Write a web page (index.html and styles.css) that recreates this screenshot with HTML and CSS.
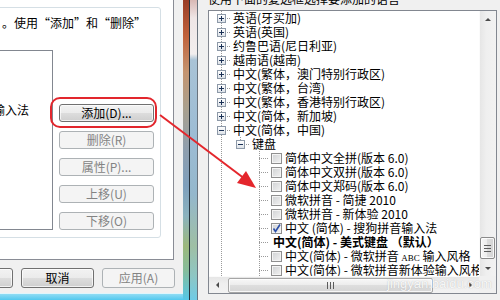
FILE: index.html
```html
<!DOCTYPE html>
<html lang="zh-CN">
<head>
<meta charset="utf-8">
<title>文本服务和输入语言</title>
<link rel="stylesheet" href="styles.css">
</head>
<body>
<div class="screen">
  <div class="win-left">
    <div class="tabpage">
      <div class="group">
        <p class="hint">。使用<span class="qo">“</span>添加<span class="qc">”</span>和<span class="qo">“</span>删除<span class="qc">”</span></p>
        <div class="group-body">
          <div class="list"><div class="list-item">输入法</div></div>
          <div class="btns">
            <button class="btn">添加(D)...</button>
            <button class="btn dis">删除(R)</button>
            <button class="btn dis">属性(P)...</button>
            <button class="btn dis">上移(U)</button>
            <button class="btn dis">下移(O)</button>
          </div>
        </div>
      </div>
    </div>
    <div class="footer">
      <button class="btn">确定</button>
      <button class="btn">取消</button>
      <button class="btn dis">应用(A)</button>
    </div>
    <div class="glass-b"></div>
  </div>

  <div class="frame">
    <div class="f1"></div><div class="fl"></div><div class="f2"></div><div class="fl2"></div>
  </div>

  <div class="win-right">
    <p class="caption">使用下面的复选框选择要添加的语言</p>
    <div class="tree">
      <div class="view">
        <div class="row"><span class="cell c-root"><i class="box"></i></span><span class="t">英语(牙买加)</span></div>
        <div class="row"><span class="cell c-root"><i class="box"></i></span><span class="t">英语(英国)</span></div>
        <div class="row"><span class="cell c-root"><i class="box"></i></span><span class="t">约鲁巴语(尼日利亚)</span></div>
        <div class="row"><span class="cell c-root"><i class="box"></i></span><span class="t">越南语(越南)</span></div>
        <div class="row"><span class="cell c-root"><i class="box"></i></span><span class="t">中文(繁体，澳门特别行政区)</span></div>
        <div class="row"><span class="cell c-root"><i class="box"></i></span><span class="t">中文(繁体，台湾)</span></div>
        <div class="row"><span class="cell c-root"><i class="box"></i></span><span class="t">中文(繁体，香港特别行政区)</span></div>
        <div class="row"><span class="cell c-root"><i class="box"></i></span><span class="t">中文(简体，新加坡)</span></div>
        <div class="row"><span class="cell c-root"><i class="box minus"></i></span><span class="t">中文(简体，中国)</span></div>
        <div class="row"><span class="cell c-line"></span><span class="cell c-last"><i class="box minus"></i></span><span class="t">键盘</span></div>
        <div class="row"><span class="cell c-line"></span><span class="cell"></span><span class="cell c-conn"></span><i class="chk"></i><span class="t2">简体中文全拼(版本 6.0)</span></div>
        <div class="row"><span class="cell c-line"></span><span class="cell"></span><span class="cell c-conn"></span><i class="chk"></i><span class="t2">简体中文双拼(版本 6.0)</span></div>
        <div class="row"><span class="cell c-line"></span><span class="cell"></span><span class="cell c-conn"></span><i class="chk"></i><span class="t2">简体中文郑码(版本 6.0)</span></div>
        <div class="row"><span class="cell c-line"></span><span class="cell"></span><span class="cell c-conn"></span><i class="chk"></i><span class="t2">微软拼音 - 简捷 2010</span></div>
        <div class="row"><span class="cell c-line"></span><span class="cell"></span><span class="cell c-conn"></span><i class="chk"></i><span class="t2">微软拼音 - 新体验 2010</span></div>
        <div class="row"><span class="cell c-line"></span><span class="cell"></span><span class="cell c-conn"></span><i class="chk on"><svg viewBox="0 0 11 11" width="11" height="11"><path d="M2.5 5.5 L4.5 8.5 L9 1.5" fill="none" stroke="#2b4fa8" stroke-width="1.6"/></svg></i><span class="t2">中文 (简体) - 搜狗拼音输入法</span></div>
        <div class="row"><span class="cell c-line"></span><span class="cell"></span><span class="cell c-conn"></span><span class="t3">中文(简体) - 美式键盘 （默认）</span></div>
        <div class="row"><span class="cell c-line"></span><span class="cell"></span><span class="cell c-conn"></span><i class="chk"></i><span class="t2">中文(简体) - 微软拼音 <small>ABC</small> 输入风格</span></div>
        <div class="row"><span class="cell c-line"></span><span class="cell"></span><span class="cell c-conn"></span><i class="chk"></i><span class="t2">中文(简体) - 微软拼音新体验输入风格</span></div>
      </div>
      <div class="vs">
        <div class="sb-btn"><i class="ar-up"></i></div>
        <div class="vs-track"><div class="vs-thumb"><i class="grip-h"></i></div></div>
        <div class="sb-btn"><i class="ar-down"></i></div>
      </div>
      <div class="hs">
        <div class="sb-btn"><i class="ar-left"></i></div>
        <div class="hs-track"><div class="hs-thumb"><i class="grip-v"></i></div></div>
        <div class="sb-btn"><i class="ar-right"></i></div>
      </div>
      <div class="corner"></div>
    </div>
  </div>

  <div class="mark"></div>
  <svg class="arrow" width="500" height="300" viewBox="0 0 500 300">
    <line x1="160" y1="115" x2="245" y2="179" stroke="#e4262c" stroke-width="2"/>
    <polygon points="256,188 237,183 246,171" fill="#e4262c"/>
  </svg>
  <div class="wm">jingyan.baidu.com</div>
</div>
</body>
</html>
```
FILE: styles.css
```css
* { box-sizing: border-box; }
html, body { margin: 0; padding: 0; }
body {
  width: 500px; height: 300px; overflow: hidden;
  font: 12px/14px "Noto Sans CJK SC", "Liberation Sans", sans-serif;
  color: #000;
}
.screen { position: relative; display: flex; width: 500px; height: 300px; overflow: hidden; }

/* ---------- left window ---------- */
.win-left { width: 183px; flex: none; display: flex; flex-direction: column; background: #f0f0f0; }
.tabpage {
  width: 174px; height: 260px; flex: none; background: #fff;
  border-right: 1px solid #898c95; border-bottom: 1px solid #898c95;
  padding-top: 7px;
}
.group {
  margin-left: -10px; width: 171px; height: 231px;
  border: 1px solid #d5dfe5; border-radius: 3px;
}
.hint { margin: 0; padding: 9px 0 0 11px; line-height: 12px; height: 21px; white-space: nowrap; }
.qo, .qc { display: inline-block; width: 12px; }
.qo { text-align: right; }
.qc { text-align: left; }
.group-body { display: flex; align-items: flex-start; gap: 6px; margin-top: 21px; }
.list {
  margin-left: -3px; width: 65px; height: 180px; flex: none;
  border: 1px solid #828790; background: #fff;
  padding: 52px 0 0 4px; white-space: nowrap; overflow: hidden;
}
.list-item { height: 14px; }
.btns { display: flex; flex-direction: column; gap: 9px; margin-top: 54px; }
.btn {
  width: 95px; height: 18px; flex: none; font: inherit; line-height: 16px; padding: 0;
  border: 1px solid #707070; border-radius: 3px;
  background: linear-gradient(#f2f2f2 0, #ebebeb 50%, #dddddd 50%, #cfcfcf 100%);
  box-shadow: inset 0 0 0 1px rgba(255,255,255,.7);
  color: #000; text-align: center; white-space: nowrap;
}
.btn.dis { border-color: #adb2b5; background: #f4f4f4; color: #838383; box-shadow: none; }
.footer { height: 33px; flex: none; display: flex; gap: 8px; padding-top: 8px; margin-left: -60px; }
.footer .btn { width: 73px; height: 20px; line-height: 18px; }
.glass-b {
  height: 7px; flex: none;
  border-top: 1px solid #dff5fb;
  background: linear-gradient(#8fdcf4, #52c8ee);
}

/* ---------- glass frame ---------- */
.frame { width: 15px; flex: none; display: flex; }
.f1 {
  width: 6px;
  background: linear-gradient(#9a3d26 0, #c0623c 12%, #c49470 24%, #a9a08e 36%, #8e9eae 50%, #7e9fbc 62%, #8bb2be 72%, #9cb87c 82%, #86bc9a 90%, #55c8e8 100%);
}
.fl { width: 1px; background: #26323c; }
.f2 {
  width: 7px;
  background: linear-gradient(#d9b8b4 0, #efe6e6 6%, #f2eeee 18%, #a9c3d6 20%, #9dbcd4 45%, #94b7cc 65%, #9fbfa4 82%, #8ec6c4 92%, #6fcbe6 100%);
}
.fl2 { width: 1px; background: #69737d; }

/* ---------- right window ---------- */
.win-right { flex: 1; background: #f0f0f0; padding-left: 10px; }
.caption { margin: -7px 0 0; line-height: 12px; height: 12px; white-space: nowrap; overflow: hidden; }
.tree {
  margin-top: 5px; width: 289px; height: 284px;
  border: 1px solid #828790; background: #fff;
  display: grid; grid-template-columns: 270px 17px; grid-template-rows: 265px 17px;
}
.view { overflow: hidden; padding-left: 3px; white-space: nowrap; }
.row { display: flex; height: 14px; align-items: center; }
.cell { width: 19px; height: 14px; flex: none; display: flex; justify-content: center; padding-top: 3px; }
.c-root {
  background:
    repeating-linear-gradient(to right, #9a9a9a 0 1px, transparent 1px 2px) 9px 7px / 10px 1px no-repeat,
    repeating-linear-gradient(to bottom, #9a9a9a 0 1px, transparent 1px 2px) 9px 0 / 1px 14px no-repeat;
}
.c-line {
  background: repeating-linear-gradient(to bottom, #9a9a9a 0 1px, transparent 1px 2px) 9px 0 / 1px 14px no-repeat;
}
.c-last {
  background:
    repeating-linear-gradient(to right, #9a9a9a 0 1px, transparent 1px 2px) 9px 7px / 10px 1px no-repeat,
    repeating-linear-gradient(to bottom, #9a9a9a 0 1px, transparent 1px 2px) 9px 0 / 1px 7px no-repeat;
}
.c-conn {
  background:
    repeating-linear-gradient(to right, #9a9a9a 0 1px, transparent 1px 2px) 9px 7px / 10px 1px no-repeat,
    repeating-linear-gradient(to bottom, #9a9a9a 0 1px, transparent 1px 2px) 9px 0 / 1px 14px no-repeat;
}
.box {
  display: block; width: 9px; height: 9px;
  border: 1px solid #8d99a8;
  background:
    linear-gradient(#1b3156, #1b3156) center / 5px 1px no-repeat,
    linear-gradient(#1b3156, #1b3156) center / 1px 5px no-repeat,
    linear-gradient(#ffffff, #dde2e8);
}
.box.minus {
  background:
    linear-gradient(#1b3156, #1b3156) center / 5px 1px no-repeat,
    linear-gradient(#ffffff, #dde2e8);
}
.t, .t2, .t3 { display: block; height: 14px; line-height: 14px; }
.t { margin-left: 2px; }
.chk {
  display: block; flex: none; width: 11px; height: 11px; margin-left: 2px;
  border: 1px solid #8f8f8f;
  box-shadow: inset 0 0 0 1px #f4f4f4;
  background: linear-gradient(135deg, #cfd1d3, #f2f2f2);
}
.chk svg { display: block; margin: -1px 0 0 -1px; }
.t2 { margin-left: 3px; }
.t2 small { font-family: "Liberation Serif", serif; font-size: 9px; }
.t3 { margin-left: 4px; font-weight: bold; }

/* scrollbars */
.vs {
  grid-column: 2; grid-row: 1; display: flex; flex-direction: column;
  border-left: 1px solid #fbfbfb;
  background: linear-gradient(to right, #e6e6e6, #efefef 40%, #f2f2f2);
}
.hs {
  grid-column: 1; grid-row: 2; display: flex;
  border-top: 1px solid #fbfbfb;
  background: linear-gradient(#e6e6e6, #efefef 40%, #f2f2f2);
}
.corner { grid-column: 2; grid-row: 2; background: #f0f0f0; }
.sb-btn { width: 16px; height: 16px; flex: none; display: flex; align-items: center; justify-content: center; }
.hs .sb-btn { width: 17px; }
.ar-up { width: 0; height: 0; border-left: 3px solid transparent; border-right: 3px solid transparent; border-bottom: 3px solid #4b4b4b; }
.ar-down { width: 0; height: 0; border-left: 3px solid transparent; border-right: 3px solid transparent; border-top: 3px solid #4b4b4b; }
.ar-left { width: 0; height: 0; border-top: 3px solid transparent; border-bottom: 3px solid transparent; border-right: 3px solid #4b4b4b; }
.ar-right { width: 0; height: 0; border-top: 3px solid transparent; border-bottom: 3px solid transparent; border-left: 3px solid #4b4b4b; }
.vs-track { flex: 1; display: flex; flex-direction: column; justify-content: flex-end; padding-bottom: 1px; }
.vs-thumb {
  width: 15px; height: 22px; display: flex; align-items: center; justify-content: center;
  border: 1px solid #8a8a8a; border-radius: 2px;
  background: linear-gradient(to right, #f6f6f6, #ececec 50%, #dcdcdc 50%, #d4d4d4);
  box-shadow: inset 0 0 0 1px rgba(255,255,255,.8);
}
.grip-h { display: block; width: 7px; height: 7px; background: repeating-linear-gradient(#5c5c5c 0 1px, transparent 1px 3px); }
.hs-track { flex: 1; display: flex; align-items: center; padding-left: 2px; }
.hs-thumb {
  width: 205px; height: 15px; display: flex; align-items: center; justify-content: center;
  border: 1px solid #a6a6a6; border-radius: 2px;
  background: linear-gradient(#f7f7f7, #ececec 50%, #dedede 50%, #d5d5d5);
  box-shadow: inset 0 0 0 1px rgba(255,255,255,.8);
}
.grip-v { display: block; width: 7px; height: 7px; background: repeating-linear-gradient(to right, #5c5c5c 0 1px, transparent 1px 3px); }

/* ---------- annotations ---------- */
.mark {
  position: absolute; left: 50px; top: 97px; width: 107px; height: 31px;
  border: 2px solid #e2262d; border-radius: 10px;
}
.arrow { position: absolute; left: 0; top: 0; pointer-events: none; }
.wm {
  position: absolute; left: 387px; top: 276px;
  font: 13px/16px "Liberation Sans", sans-serif; color: rgba(255,255,255,.9);
  text-shadow: 0 0 1px rgba(120,120,120,.5);
}
```
